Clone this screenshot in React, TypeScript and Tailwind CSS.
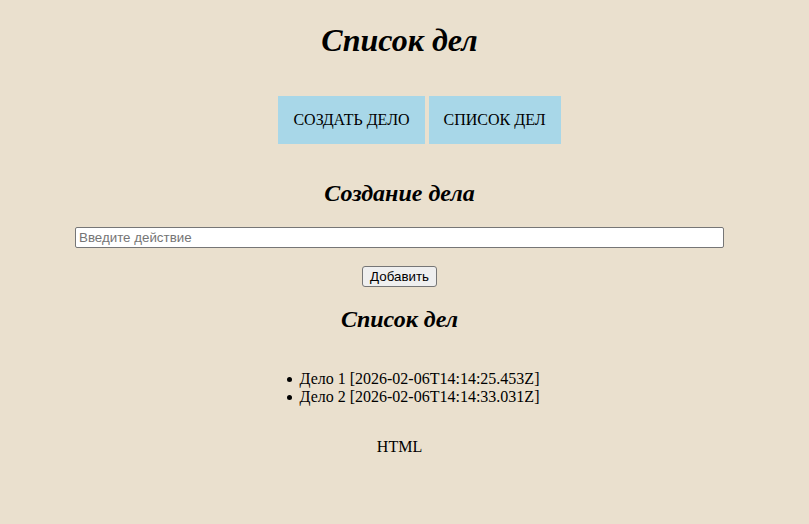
export default function App() {
  const items = [
    'Дело 1 [2026-02-06T14:14:25.453Z]',
    'Дело 2 [2026-02-06T14:14:33.031Z]',
  ]

  return (
    <div className="min-h-[524px] w-full bg-[#eae0ce] text-black font-['Liberation_Serif',serif]">
      <div className="flex w-[799px] flex-col">
        <h1 className="mt-[22px] mb-[21px] text-center text-[32px] leading-[37px] font-bold italic">Список дел</h1>

        {/* nav */}
        <ul className="my-[16px] flex justify-center gap-[4px] pl-[40px]">
          {['СОЗДАТЬ ДЕЛО', 'СПИСОК ДЕЛ'].map((label) => (
            <li key={label}>
              <a className="inline-block bg-[#a8d7e8] px-[15px] py-[15px] text-[16px] leading-[18px]">{label}</a>
            </li>
          ))}
        </ul>

        <h2 className="mt-[20px] mb-[20px] text-center text-[24px] leading-[27px] font-bold italic">Создание дела</h2>

        <input
          type="text"
          placeholder="Введите действие"
          className="mx-auto h-[21px] w-[649px] rounded-[2px] border border-[#767676] bg-white px-[3px] font-['Liberation_Sans',Arial,sans-serif] text-[13.33px] placeholder:text-[#757575] outline-none"
        />

        <div className="mt-[18px] flex justify-center">
          <button className="h-[21px] w-[75px] rounded-[3px] border border-[#767676] bg-[#efefef] font-['Liberation_Sans',Arial,sans-serif] text-[13.33px] leading-[17px]">
            Добавить
          </button>
        </div>

        <h2 className="mt-[19px] mb-[20px] text-center text-[24px] leading-[27px] font-bold italic">Список дел</h2>

        <ul className="mt-[17px] pl-[40px] text-center">
          {items.map((t) => (
            <li key={t} className="text-[16px] leading-[18px]">
              <span className="relative">
                <span className="absolute -left-[13px] top-[7px] h-[5px] w-[5px] rounded-full bg-black" />
                {t}
              </span>
            </li>
          ))}
        </ul>

        <p className="mt-[32px] text-center text-[16px] leading-[18px]">HTML</p>
      </div>
    </div>
  )
}
